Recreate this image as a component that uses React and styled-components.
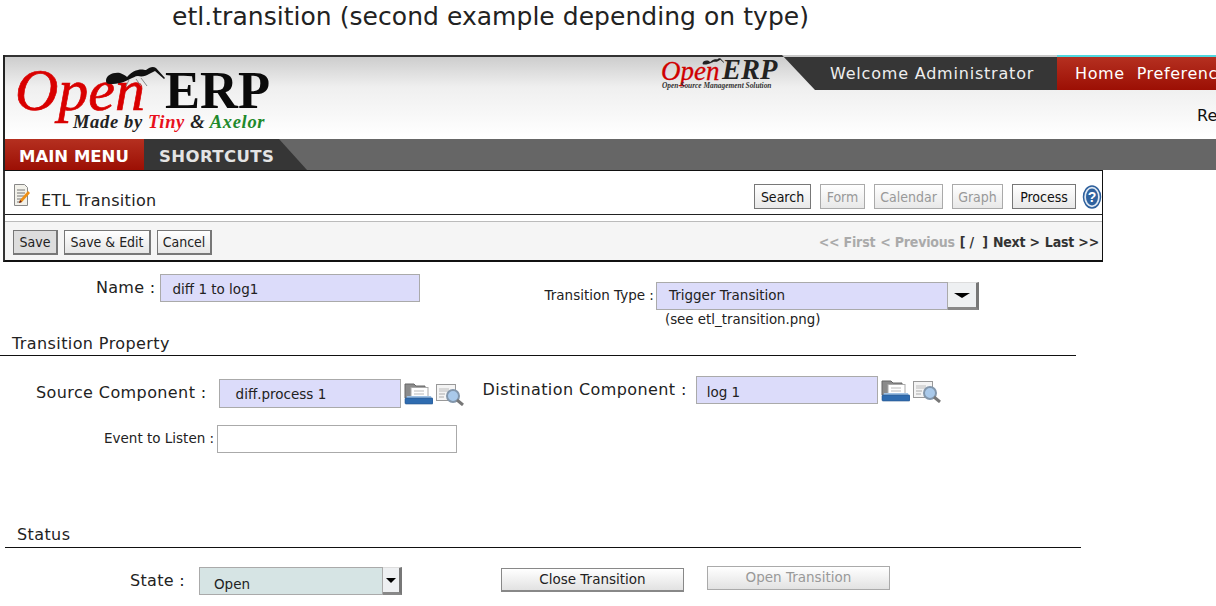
import React from "react";
import styled, { createGlobalStyle } from "styled-components";

const Global = createGlobalStyle`
  html, body { margin: 0; padding: 0; background: #fff; }
  body { width: 1216px; height: 606px; overflow: hidden; font-family: "DejaVu Sans", sans-serif; color: #111; }
`;
const Page = styled.div`width: 1216px; height: 606px; overflow: hidden;`;
const Title = styled.h1`
  margin: 0; height: 55px; padding: 2px 0 0 172px; box-sizing: border-box;
  font-size: 25px; line-height: 30px; font-weight: 400; color: #222; letter-spacing: .04px;
`;
const Frame = styled.div`
  margin-left: 3px; width: 1213px; height: 115px; overflow: hidden; box-sizing: border-box;
  border-left: 2px solid #222;
`;
const Header = styled.header`
  height: 84px; box-sizing: border-box; border-top: 2px solid #333;
  background: linear-gradient(#cdcdcd 0, #efefef 30px, #fff 80px); display: flex; justify-content: space-between;
`;
const Logo = styled.div`position: relative; width: 280px; height: 82px; flex: none;`;
const OpenWord = styled.span`
  position: absolute; left: 10px; top: 3px; font: italic 400 60px/60px "Liberation Serif", serif; color: #d90000;
  -webkit-text-stroke: .7px #d90000;
`;
const ErpWord = styled.span`
  position: absolute; left: 160px; top: 6px; font: 700 52.5px/54px "Liberation Serif", serif; color: #0a0a0a;
`;
const Tag = styled.span`
  position: absolute; left: 68px; top: 55px; font: italic 700 18.5px/20px "Liberation Serif", serif; color: #222;
  white-space: nowrap; letter-spacing: .65px;
`;
const Tint = styled.span`color: ${p => p.$c};`;
const Ant = styled.svg`position: absolute; left: ${p => p.$l}px; top: ${p => p.$t}px;`;
const HeaderRight = styled.div`display: flex; flex-direction: column; width: 559px; flex: none;`;
const TopLine = styled.div`display: flex; height: 35px; margin-top: -2px; align-items: stretch;`;
const MiniLogo = styled.div`position: relative; width: 126px; flex: none; margin-left: -1px;`;
const MiniOpen = styled.span`
  position: absolute; left: 5px; top: 1px; font: italic 400 27px/30px "Liberation Serif", serif; color: #d00000;
  -webkit-text-stroke: .3px #d00000;
`;
const MiniErp = styled.span`position: absolute; left: 66px; top: 2px; font: italic 700 28.5px/26px "Liberation Serif", serif; color: #222;`;
const MiniTag = styled.span`position: absolute; left: 6px; top: 27px; font: italic 700 7.4px/8px "Liberation Serif", serif; color: #333; white-space: nowrap;`;
const Welcome = styled.div`
  width: 275px; flex: none; background: #363636; color: #eee; font-size: 16px; letter-spacing: .8px;
  border-top: 2px solid #c8c8c8;
  display: flex; align-items: center; padding: 0 0 0 48px; box-sizing: border-box;
  clip-path: polygon(0 0, 100% 0, 100% 100%, 33px 100%);
`;
const RedMenu = styled.div`
  flex: 1; background: linear-gradient(#b53020, #9c0f04); color: #fff; font-size: 16px; letter-spacing: .6px;
  border-top: 2px solid #50d8e0;
  display: flex; align-items: center; gap: 12px; padding: 0 0 0 18px; box-sizing: border-box; white-space: nowrap;
`;
const Requests = styled.div`
  margin: 16px 0 0 auto; font-size: 16px; white-space: nowrap; width: 19px; overflow: hidden; line-height: 20px;
`;
const Nav = styled.nav`height: 31px; background: #666; display: flex;`;
const NavRed = styled.div`
  width: 139px; box-sizing: border-box; background: linear-gradient(#b53020, #9c0f04); color: #fff;
  font-size: 16.5px; font-weight: 700; display: flex; align-items: center; padding: 3px 0 0 14px;
`;
const NavDark = styled.div`
  width: 163px; box-sizing: border-box; background: #363636; color: #e4e4e4;
  font-size: 16.5px; font-weight: 700; letter-spacing: .4px; display: flex; align-items: center; padding: 3px 0 0 15px;
  clip-path: polygon(0 0, 135px 0, 100% 100%, 0 100%);
`;
const Panel = styled.section`
  width: 1100px; margin-left: 3px; box-sizing: border-box; height: 92px;
  border: 1px solid #111; border-width: 1px 1px 2px 2px; border-left-color: #333;
`;
const ViewBar = styled.div`
  height: 44px; box-sizing: border-box; border-bottom: 1px solid #222; display: flex; align-items: center; padding-left: 8px;
`;
const DocIcon = styled.svg`flex: none; margin-top: 5px;`;
const ViewTitle = styled.div`font-size: 16px; letter-spacing: .3px; color: #222; margin: 15px auto 0 10px;`;
const Tools = styled.div`display: flex; gap: 9px; align-items: center; margin-top: 8px;`;
const ToolButton = styled.span`
  width: ${p => p.$w}px; height: 25px; box-sizing: border-box; display: flex; align-items: center; justify-content: center;
  border: 1px solid ${p => (p.$off ? "#aaa" : "#777")}; background: linear-gradient(#fff, #e8e8e8);
  font: 14px "DejaVu Sans Condensed", "DejaVu Sans", sans-serif; color: ${p => (p.$off ? "#999" : "#111")};
`;
const HelpIcon = styled.svg`margin-left: -3px;`;
const ActionBar = styled.div`
  margin-top: 6px; height: 39px; box-sizing: border-box; border-top: 1px solid #bbb; background: #f5f5f5;
  display: flex; align-items: center; justify-content: space-between; padding: 0 3px 0 8px;
`;
const Actions = styled.div`display: flex; gap: 6px; margin-top: 2px;`;
const ActionButton = styled.span`
  width: ${p => p.$w}px; height: 25px; box-sizing: border-box; display: flex; align-items: center; justify-content: center;
  border: 1px solid #777; border-width: 1px 2px 2px 1px; background: ${p => (p.$on ? "#ddd" : "linear-gradient(#fff, #e6e6e6)")};
  font: 14px "DejaVu Sans Condensed", "DejaVu Sans", sans-serif; color: #222;
`;
const Pager = styled.div`
  font: 700 14px "DejaVu Sans Condensed", "DejaVu Sans", sans-serif; color: #333; display: flex; gap: 5px; margin-top: 2px;
  letter-spacing: -.2px; white-space: pre;
`;
const Off = styled.span`color: #aaa;`;
const Row = styled.div`display: flex; align-items: flex-start; height: ${p => p.$h}px;`;
const Label = styled.label`
  font-size: ${p => p.$size || 16}px; line-height: 20px; color: #222; white-space: nowrap; letter-spacing: ${p => p.$ls || 0}px;
  margin: ${p => p.$mt || 0}px 0 0 ${p => p.$ml || 0}px;
`;
const Cluster = styled.div`
  display: flex; align-items: flex-start; margin: ${p => p.$mt || 0}px 0 0 ${p => p.$ml || 0}px;
`;
const Field = styled.div`
  box-sizing: border-box; display: flex; align-items: center; background: ${p => p.$bg || "#dcdcfa"};
  border: 1px solid #aaa; width: ${p => p.$w}px; height: ${p => p.$h}px;
  padding: ${p => p.$pt || 0}px 0 ${p => p.$pb || 0}px ${p => p.$pad || 10}px; font-size: 13.5px; color: #222;
  margin-left: ${p => p.$ml || 0}px; margin-top: ${p => p.$mt || 0}px; flex: none;
`;
const Arrow = styled.div`
  box-sizing: border-box; flex: none; width: ${p => p.$w}px; height: ${p => p.$h}px; background: #eef0f2;
  border-right: 3px solid #777; border-bottom: 3px solid #888; border-top: 1px solid #ddd;
  display: flex; align-items: center; justify-content: center;
  &::after { content: ""; border-style: solid; border-color: #000 transparent transparent; border-width: 5px ${p => p.$a}px 0; }
`;
const Stack = styled.div`margin: ${p => p.$mt}px 0 0 ${p => p.$ml}px;`;
const Heading = styled.div`
  font-size: 16px; line-height: ${p => p.$lh}px; color: #222; box-sizing: border-box; border-bottom: 1px solid #111; letter-spacing: ${p => p.$ls}px;
  margin-left: ${p => p.$l}px; width: ${p => p.$w}px; padding-left: ${p => p.$p}px; height: 21px;
`;
const Note = styled.div`font-size: 13.4px; color: #222; margin: 2px 0 0 9px;`;
const BigButton = styled.div`
  box-sizing: border-box; width: 183px; height: 24px; display: flex; align-items: center; justify-content: center; flex: none;
  padding-bottom: 2px;
  border: 1px solid ${p => (p.$off ? "#aaa" : "#888")}; ${p => !p.$off && "border-bottom: 2px solid #888;"}
  background: linear-gradient(#fff, #e2e2e2); font-size: 13.5px; color: ${p => (p.$off ? "#999" : "#222")};
  margin: ${p => p.$mt}px 0 0 ${p => p.$ml}px;
`;
const IconSet = styled.div`display: flex; gap: 2px; margin: ${p => p.$mt}px 0 0 3px;`;

const antBody = "M1 15c0-6 7-9 14-8 3 1 6 3 7 4 2-2 5-6 11-7 4-1 6 0 8 0 4-3 7-4 10-2l9 10-1 1-9-8-6 3c-3 2-7 3-11 2-3 0-5 2-8 3-5 3-12 5-20 5-3 0-4-1-4-3z";

const FolderIcon = () => (
  <svg width="29" height="22" viewBox="0 0 29 22">
    <path d="M1 1h9l2 2h9v12H1z" fill="#8b8b8b" stroke="#666" />
    <rect x="7" y="4.5" width="17" height="11" fill="#fff" stroke="#aaa" />
    <path d="M10 8h10M10 11h10" stroke="#bbb" />
    <path d="M3 13h24l1 3H2z" fill="#9dc0e4" />
    <rect x="1" y="15" width="28" height="6" rx="1" fill="#2f6cb0" stroke="#25558c" strokeWidth=".6" />
  </svg>
);
const SearchIcon = () => (
  <svg width="30" height="23" viewBox="0 0 30 23">
    <rect x="1.5" y="1.5" width="19" height="16" fill="#f4f4f4" stroke="#999" />
    <path d="M4 5h10v4H4z" fill="#d8d8d8" />
    <path d="M4 11h6M4 14h5" stroke="#aaa" />
    <circle cx="18" cy="13" r="6" fill="#a9c9ea" stroke="#8296ab" strokeWidth="2" />
    <path d="M22 17l6 5" stroke="#777" strokeWidth="3" />
  </svg>
);
const LookupIcons = ({ mt }) => <IconSet $mt={mt}><FolderIcon /><SearchIcon /></IconSet>;

export default function App() {
  return (
    <Page>
      <Global />
      <Title>etl.transition (second example depending on type)</Title>
      <Frame>
        <Header>
          <Logo>
            <OpenWord>Open</OpenWord>
            <Ant $l={100} $t={9} width="62" height="22" viewBox="0 0 62 22">
              <path d={antBody} fill="#111" />
              <path d="M31 13l5 7M36 12l6 8M24 14l-3 6" fill="none" stroke="#888" strokeWidth="1" />
            </Ant>
            <ErpWord>ERP</ErpWord>
            <Tag>Made by <Tint $c="#e8101c">Tiny</Tint> &amp; <Tint $c="#1f8a2c">Axelor</Tint></Tag>
          </Logo>
          <HeaderRight>
            <TopLine>
              <MiniLogo>
                <MiniOpen>Open</MiniOpen>
                <Ant $l={44} $t={3} width="27" height="8" viewBox="0 0 62 22">
                  <path d={antBody} fill="#222" />
                </Ant>
                <MiniErp>ERP</MiniErp>
                <MiniTag>Open Source Management Solution</MiniTag>
              </MiniLogo>
              <Welcome>Welcome Administrator</Welcome>
              <RedMenu><span>Home</span><span>Preferences</span></RedMenu>
            </TopLine>
            <Requests>Re</Requests>
          </HeaderRight>
        </Header>
        <Nav>
          <NavRed>MAIN MENU</NavRed>
          <NavDark>SHORTCUTS</NavDark>
        </Nav>
      </Frame>
      <Panel>
        <ViewBar>
          <DocIcon width="18" height="25" viewBox="0 0 18 25">
            <path d="M1.5 1.5h10l3 3v18h-13z" fill="#f2f1ea" stroke="#888" />
            <path d="M4 7h8M4 10h8M4 13h7M4 16h5M4 19h3" stroke="#777" />
            <path d="M6 20l1-3 8-9 2 2-8 9z" fill="#ee8f14" />
            <path d="M6 20l1-3 2 2z" fill="#622" />
          </DocIcon>
          <ViewTitle>ETL Transition</ViewTitle>
          <Tools>
            <ToolButton $w={57}>Search</ToolButton>
            <ToolButton $w={45} $off>Form</ToolButton>
            <ToolButton $w={69} $off>Calendar</ToolButton>
            <ToolButton $w={51} $off>Graph</ToolButton>
            <ToolButton $w={64}>Process</ToolButton>
            <HelpIcon width="20" height="24" viewBox="0 0 20 24">
              <ellipse cx="10" cy="12" rx="8.5" ry="11" fill="#dfe8f2" stroke="#2d5f9c" strokeWidth="1.5" />
              <ellipse cx="10" cy="12" rx="6" ry="8.5" fill="#2f629f" />
              <text x="10" y="17" fontSize="14" fontWeight="700" fill="#fff" textAnchor="middle" fontFamily="Liberation Sans">?</text>
            </HelpIcon>
          </Tools>
        </ViewBar>
        <ActionBar>
          <Actions>
            <ActionButton $w={45} $on>Save</ActionButton>
            <ActionButton $w={87}>Save &amp; Edit</ActionButton>
            <ActionButton $w={55}>Cancel</ActionButton>
          </Actions>
          <Pager><Off>&lt;&lt; First</Off><Off>&lt; Previous</Off><span>[ /  ]</span><span>Next &gt;</span><span>Last &gt;&gt;</span></Pager>
        </ActionBar>
      </Panel>
      <Row $h={73}>
        <Label $ml={96} $mt={16} $ls={.3}>Name :</Label>
        <Field $w={260} $h={28} $ml={5} $mt={12} $pad={11} $pt={1}>diff 1 to log1</Field>
        <Label $size={13.5} $ml={124} $mt={23}>Transition Type :</Label>
        <Stack $ml={2} $mt={20}>
          <Cluster>
            <Field $w={292} $h={28} $pad={12} $pb={2}>Trigger Transition</Field>
            <Arrow $w={31} $h={28} $a={8} />
          </Cluster>
          <Note>(see etl_transition.png)</Note>
        </Stack>
      </Row>
      <Heading $l={0} $w={1076} $p={12} $ls={.4} $lh={18}>Transition Property</Heading>
      <Row $h={69}>
        <Label $ml={36} $mt={27} $ls={.4}>Source Component :</Label>
        <Field $w={182} $h={29} $ml={12} $mt={23} $pad={16} $pt={1}>diff.process 1</Field>
        <LookupIcons mt={27} />
        <Label $ml={18} $mt={24} $ls={.4}>Distination Component :</Label>
        <Field $w={182} $h={28} $ml={9} $mt={20} $pad={10} $pt={3}>log 1</Field>
        <LookupIcons mt={24} />
      </Row>
      <Row $h={102}>
        <Label $size={13.5} $ml={104} $mt={3}>Event to Listen :</Label>
        <Field $w={240} $h={28} $ml={3} $bg="#fff" />
      </Row>
      <Heading $l={5} $w={1076} $p={12} $ls={.4} $lh={16}>Status</Heading>
      <Row $h={56}>
        <Label $ml={130} $mt={23} $ls={.3}>State :</Label>
        <Cluster $ml={14} $mt={19}>
          <Field $w={184} $h={28} $bg="#d6e4e4" $pad={14} $pt={5}>Open</Field>
          <Arrow $w={19} $h={28} $a={5} />
        </Cluster>
        <BigButton $ml={99} $mt={20}>Close Transition</BigButton>
        <BigButton $off $ml={23} $mt={18}>Open Transition</BigButton>
      </Row>
    </Page>
  );
}
